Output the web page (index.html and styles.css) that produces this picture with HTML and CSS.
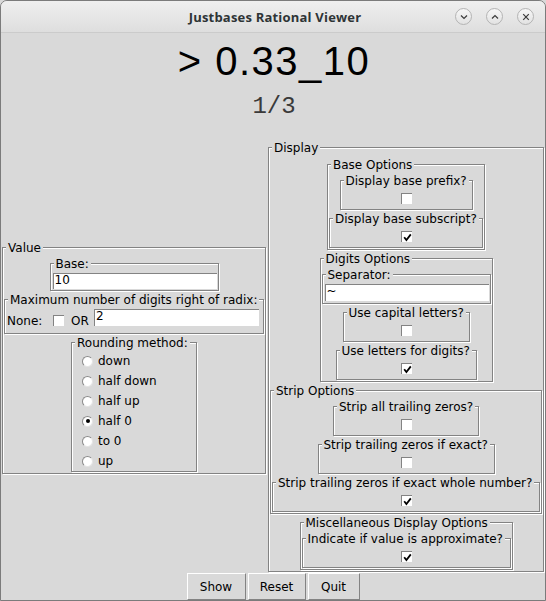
FILE: index.html
```html
<!DOCTYPE html>
<html>
<head>
<meta charset="utf-8">
<link rel="stylesheet" href="styles.css">
</head>
<body>
<div class="window">
  <div class="titlebar">
    <div class="title">Justbases Rational Viewer</div>
    <div class="wbtns">
      <div class="wb"><svg width="8" height="8" viewBox="0 0 8 8"><path d="M1 2.5 L4 5.5 L7 2.5" fill="none" stroke="#3c3c3c" stroke-width="1.2"/></svg></div>
      <div class="wb"><svg width="8" height="8" viewBox="0 0 8 8"><path d="M1 5.5 L4 2.5 L7 5.5" fill="none" stroke="#3c3c3c" stroke-width="1.2"/></svg></div>
      <div class="wb"><svg width="8" height="8" viewBox="0 0 8 8"><path d="M1.2 1.2 L6.8 6.8 M6.8 1.2 L1.2 6.8" fill="none" stroke="#3c3c3c" stroke-width="1.2"/></svg></div>
    </div>
  </div>

  <div class="content">
    <div class="big">&gt; 0.33_10</div>
    <div class="frac">1/3</div>

    <div class="main">
      <div class="col col-left">
        <div class="lf w-value">
          <div class="lf-title">Value</div>
          <div class="lf w-base">
            <div class="lf-title">Base:</div>
            <div class="entry entry-base">10</div>
          </div>
          <div class="lf w-max">
            <div class="lf-title">Maximum number of digits right of radix:</div>
            <div class="maxrow">
              <span class="lbl lbl-none">None:</span>
              <span class="cb"></span>
              <span class="lbl lbl-or">OR</span>
              <div class="entry entry-max">2</div>
            </div>
          </div>
          <div class="lf w-round">
            <div class="lf-title">Rounding method:</div>
            <div class="radio"><span class="rb"></span><span>down</span></div>
            <div class="radio"><span class="rb"></span><span>half down</span></div>
            <div class="radio"><span class="rb"></span><span>half up</span></div>
            <div class="radio"><span class="rb on"></span><span>half 0</span></div>
            <div class="radio"><span class="rb"></span><span>to 0</span></div>
            <div class="radio"><span class="rb"></span><span>up</span></div>
          </div>
        </div>
      </div>

      <div class="col col-right">
        <div class="lf w-display">
          <div class="lf-title">Display</div>

          <div class="lf w-baseopt first-gap">
            <div class="lf-title">Base Options</div>
            <div class="lf w-prefix">
              <div class="lf-title">Display base prefix?</div>
              <div class="cbrow"><span class="cb"></span></div>
            </div>
            <div class="lf w-subscript">
              <div class="lf-title">Display base subscript?</div>
              <div class="cbrow"><span class="cb"><svg class="tick" width="9" height="9" viewBox="0 0 9 9"><path d="M1.2 4.2 L3.4 7 L7.8 1.4" fill="none" stroke="#000" stroke-width="1.8"/></svg></span></div>
            </div>
          </div>

          <div class="lf w-digits">
            <div class="lf-title">Digits Options</div>
            <div class="lf w-sep">
              <div class="lf-title">Separator:</div>
              <div class="entry entry-sep">~</div>
            </div>
            <div class="lf w-capital">
              <div class="lf-title">Use capital letters?</div>
              <div class="cbrow"><span class="cb"></span></div>
            </div>
            <div class="lf w-letters">
              <div class="lf-title">Use letters for digits?</div>
              <div class="cbrow"><span class="cb"><svg class="tick" width="9" height="9" viewBox="0 0 9 9"><path d="M1.2 4.2 L3.4 7 L7.8 1.4" fill="none" stroke="#000" stroke-width="1.8"/></svg></span></div>
            </div>
          </div>

          <div class="lf w-strip">
            <div class="lf-title">Strip Options</div>
            <div class="lf w-stripall">
              <div class="lf-title">Strip all trailing zeros?</div>
              <div class="cbrow"><span class="cb"></span></div>
            </div>
            <div class="lf w-exact">
              <div class="lf-title">Strip trailing zeros if exact?</div>
              <div class="cbrow"><span class="cb"></span></div>
            </div>
            <div class="lf w-whole">
              <div class="lf-title">Strip trailing zeros if exact whole number?</div>
              <div class="cbrow"><span class="cb"><svg class="tick" width="9" height="9" viewBox="0 0 9 9"><path d="M1.2 4.2 L3.4 7 L7.8 1.4" fill="none" stroke="#000" stroke-width="1.8"/></svg></span></div>
            </div>
          </div>

          <div class="lf w-misc">
            <div class="lf-title">Miscellaneous Display Options</div>
            <div class="lf w-indicate">
              <div class="lf-title">Indicate if value is approximate?</div>
              <div class="cbrow"><span class="cb"><svg class="tick" width="9" height="9" viewBox="0 0 9 9"><path d="M1.2 4.2 L3.4 7 L7.8 1.4" fill="none" stroke="#000" stroke-width="1.8"/></svg></span></div>
            </div>
          </div>
        </div>
      </div>
    </div>

    <div class="buttons">
      <div class="btn w-show">Show</div>
      <div class="btn w-reset">Reset</div>
      <div class="btn w-quit">Quit</div>
    </div>
  </div>
</div>
</body>
</html>
```

FILE: styles.css
```css
* { box-sizing: border-box; }

html, body {
  margin: 0;
  padding: 0;
}

body {
  width: 546px;
  height: 601px;
  overflow: hidden;
  background: #d9d9d9;
  font-family: "DejaVu Sans", sans-serif;
  font-size: 12px;
  color: #000;
}

.window {
  width: 546px;
  height: 601px;
  border: 1px solid #7b7b7b;
  border-radius: 7px 7px 0 0;
  background: #d9d9d9;
  overflow: hidden;
  display: flex;
  flex-direction: column;
}

/* ---------- title bar ---------- */
.titlebar {
  flex: none;
  height: 32px;
  display: grid;
  align-items: center;
  background: linear-gradient(#efefef, #dedede);
  border-bottom: 1px solid #cbcbcb;
}
.titlebar > * { grid-area: 1 / 1; }

.title {
  justify-self: center;
  font-family: "Open Sans", sans-serif;
  font-weight: 700;
  font-size: 13px;
  letter-spacing: 0.2px;
  color: #2e3436;
  padding-left: 4px;
}

.wbtns {
  justify-self: end;
  display: flex;
  gap: 14px;
  margin-right: 11px;
}

.wb {
  width: 17px;
  height: 17px;
  border-radius: 50%;
  border: 1px solid #b4b4b4;
  background: linear-gradient(#f7f7f7, #e2e2e2);
  display: grid;
  place-items: center;
}
.wb svg { display: block; }

/* ---------- content ---------- */
.content {
  flex: 1;
  display: flex;
  flex-direction: column;
}

.big {
  font-family: "Liberation Sans", Arial, sans-serif;
  font-size: 40px;
  line-height: 56px;
  letter-spacing: 1.5px;
  text-align: center;
  padding-left: 2px;
}

.frac {
  font-family: "Liberation Mono", "Courier New", monospace;
  font-size: 24px;
  line-height: 35px;
  text-align: center;
  padding-left: 2px;
  color: #3a3a3a;
}

.main {
  margin-top: 16px;
  display: grid;
  grid-template-columns: 267px 277px;
}

.col { display: flex; }
.col-left { align-items: center; }
.col-right { align-items: flex-start; }

/* ---------- labelframes (groove) ---------- */
.lf {
  flex: none;
  border: 1px solid #838383;
  box-shadow: inset 1px 1px 0 #fff, 1px 1px 0 #fff;
  padding: 0 0 0 1px;
  margin: 7px 1px 1px 0;
  display: flex;
  flex-direction: column;
  align-items: center;
}

.lf-title {
  align-self: flex-start;
  margin: -8px 0 0 2px;
  padding: 0 2px;
  height: 16px;
  line-height: 16px;
  background: #d9d9d9;
  white-space: nowrap;
}

.first-gap { margin-top: 8px; }

.w-value { width: 264px; margin: 9px 0 1px 1px; }
.w-base { width: 169px; }
.w-max { width: 260px; }
.w-round { width: 126px; align-items: stretch; }

.w-display { width: 276px; }
.w-baseopt { width: 158px; }
.w-prefix { width: 133px; }
.w-subscript { width: 154px; }
.w-digits { width: 173px; }
.w-sep { width: 169px; }
.w-capital { width: 127px; }
.w-letters { width: 141px; }
.w-strip { width: 272px; }
.w-stripall { width: 146px; }
.w-exact { width: 177px; }
.w-whole { width: 268px; }
.w-misc { width: 213px; }
.w-indicate { width: 209px; }

/* ---------- entries ---------- */
.entry {
  align-self: stretch;
  background: #fff;
  border: 1px solid #d9d9d9;
  box-shadow: inset 1px 1px 0 #838383;
  padding: 0 0 0 2px;
  line-height: 15px;
  white-space: nowrap;
}
.entry-base { height: 18px; }
.entry-sep { height: 19px; margin-bottom: 1px; }
.entry-max { height: 19px; width: 167px; flex: none; }

/* ---------- checkbox ---------- */
.cbrow {
  align-self: stretch;
  height: 20px;
  display: flex;
  justify-content: center;
  align-items: flex-start;
  padding-top: 4px;
}

.cb {
  flex: none;
  width: 11px;
  height: 11px;
  background: #fff;
  border-top: 1px solid #838383;
  border-left: 1px solid #838383;
  display: grid;
  place-items: center;
}
.tick { display: block; }

/* ---------- max digits row ---------- */
.maxrow {
  align-self: stretch;
  height: 25px;
  display: flex;
  align-items: center;
}
.lbl { flex: none; white-space: nowrap; }
.lbl-none { width: 47px; padding-left: 1px; }
.lbl-or { width: 23px; padding-left: 1px; margin-left: 6px; }

/* ---------- radios ---------- */
.radio {
  height: 20px;
  display: flex;
  align-items: center;
  padding-left: 9px;
  white-space: nowrap;
}

.rb {
  flex: none;
  width: 11px;
  height: 11px;
  border-radius: 50%;
  background: #fff;
  border: 1px solid;
  border-color: #8a8a8a #e4e4e4 #e4e4e4 #8a8a8a;
  margin-right: 5px;
  display: grid;
  place-items: center;
}
.rb.on::after {
  content: "";
  width: 4px;
  height: 4px;
  border-radius: 50%;
  background: #000;
}

/* ---------- buttons ---------- */
.buttons {
  display: flex;
  justify-content: center;
  gap: 2px;
}

.btn {
  height: 27px;
  border: 1px solid;
  border-color: #fff #838383 #838383 #fff;
  display: flex;
  align-items: center;
  justify-content: center;
  white-space: nowrap;
}
.w-show { width: 59px; }
.w-reset { width: 58px; }
.w-quit { width: 52px; }
```
